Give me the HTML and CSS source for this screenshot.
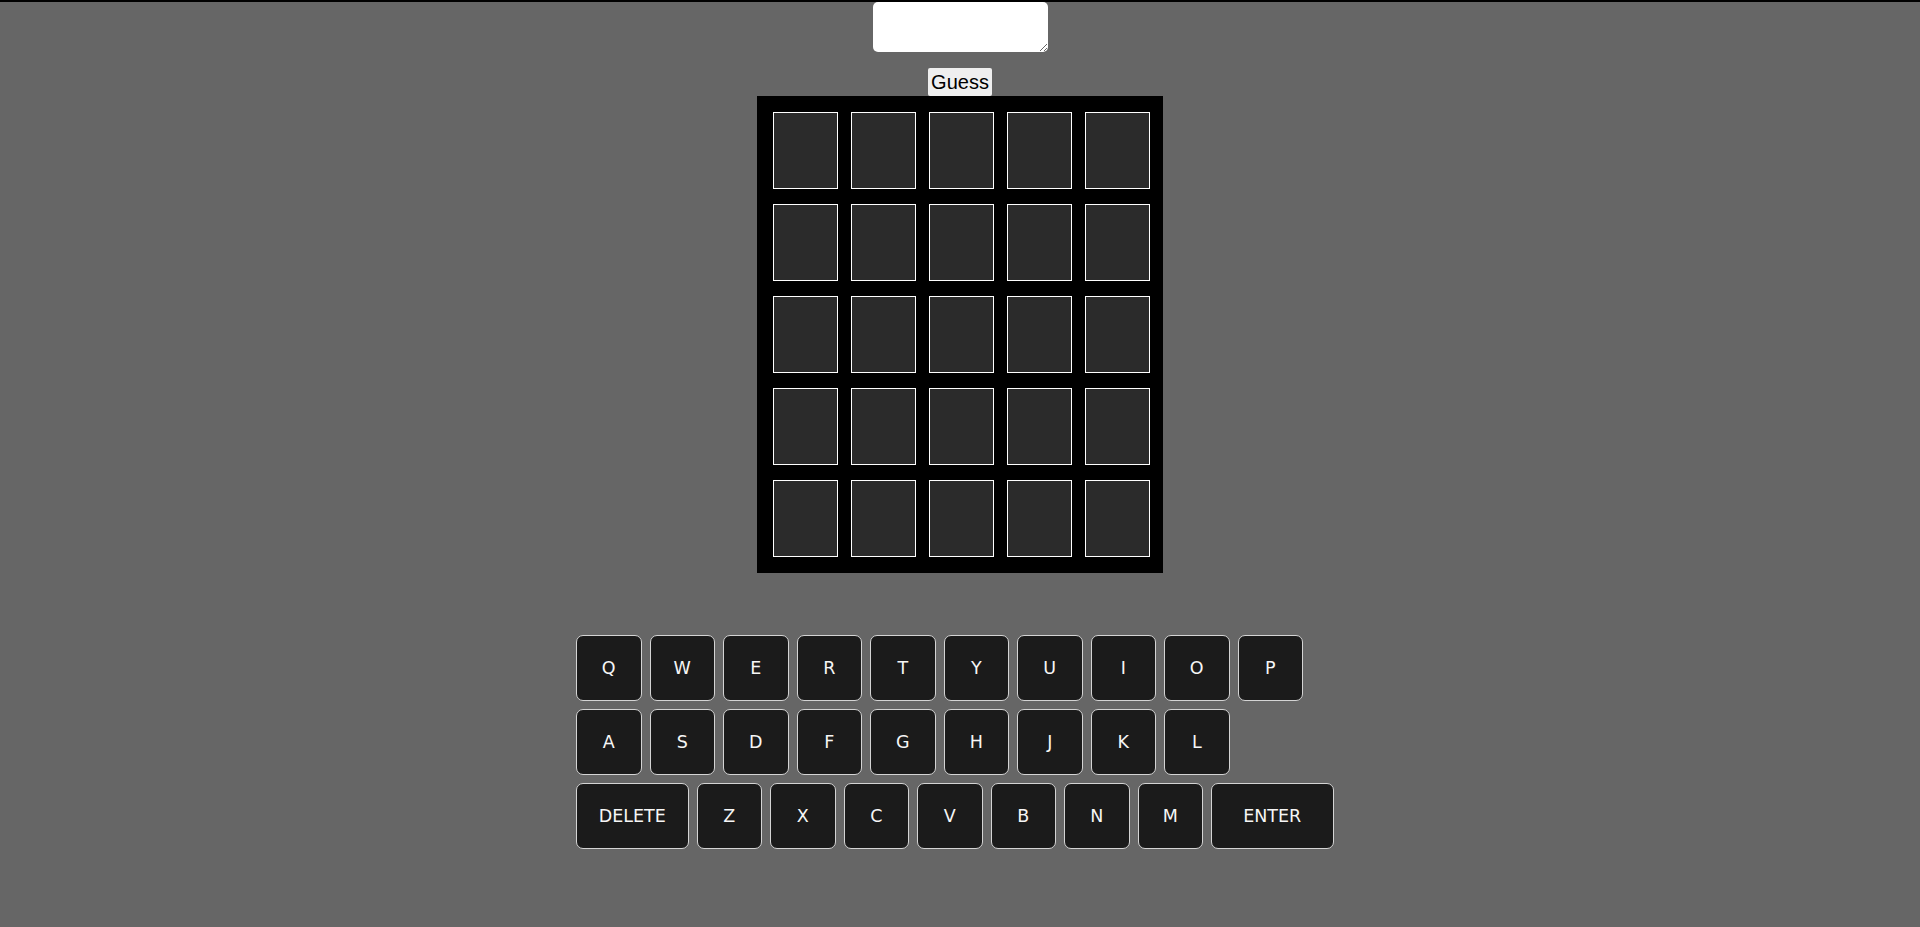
FILE: index.html
```html
<!DOCTYPE html>
<html lang="en">
<head>
<meta charset="utf-8">
<title>Wordle</title>
<link rel="stylesheet" href="styles.css">
</head>
<body>
<div class="app">
  <textarea class="guess-input"></textarea>
  <button class="guess-btn">Guess</button>
  <div class="board">
    <div class="tile"></div><div class="tile"></div><div class="tile"></div><div class="tile"></div><div class="tile"></div>
    <div class="tile"></div><div class="tile"></div><div class="tile"></div><div class="tile"></div><div class="tile"></div>
    <div class="tile"></div><div class="tile"></div><div class="tile"></div><div class="tile"></div><div class="tile"></div>
    <div class="tile"></div><div class="tile"></div><div class="tile"></div><div class="tile"></div><div class="tile"></div>
    <div class="tile"></div><div class="tile"></div><div class="tile"></div><div class="tile"></div><div class="tile"></div>
  </div>
  <div class="keyboard">
    <div class="key-row">
      <button class="key">Q</button><button class="key">W</button><button class="key">E</button><button class="key">R</button><button class="key">T</button><button class="key">Y</button><button class="key">U</button><button class="key">I</button><button class="key">O</button><button class="key">P</button>
    </div>
    <div class="key-row">
      <button class="key">A</button><button class="key">S</button><button class="key">D</button><button class="key">F</button><button class="key">G</button><button class="key">H</button><button class="key">J</button><button class="key">K</button><button class="key">L</button>
    </div>
    <div class="key-row">
      <button class="key key-delete">DELETE</button><button class="key">Z</button><button class="key">X</button><button class="key">C</button><button class="key">V</button><button class="key">B</button><button class="key">N</button><button class="key">M</button><button class="key key-enter">ENTER</button>
    </div>
  </div>
</div>
</body>
</html>
```

FILE: styles.css
```css
html, body {
  margin: 0;
  padding: 0;
}
body {
  background: #666666;
  border-top: 2px solid #000;
  min-height: 925px;
  font-family: "Liberation Sans", Arial, sans-serif;
}
.app {
  display: flex;
  flex-direction: column;
  align-items: center;
}
.guess-input {
  display: block;
  width: 175px;
  height: 50px;
  box-sizing: border-box;
  border: none;
  border-radius: 5px;
  background: #fff;
  margin: 0;
  padding: 2px;
}
.guess-btn {
  margin-top: 16px;
  height: 28px;
  padding: 0 3px;
  line-height: 28px;
  font-family: "Liberation Sans", Arial, sans-serif;
  font-size: 20px;
  color: #000;
  background: #efefef;
  border: none;
  border-radius: 2px;
}
.board {
  width: 406px;
  box-sizing: border-box;
  background: #000;
  padding: 16px 13px 16px 16px;
  display: grid;
  grid-template-columns: repeat(5, 65px);
  grid-auto-rows: 77px;
  column-gap: 13px;
  row-gap: 15px;
}
.tile {
  background: #2b2b2b;
  border: 1px solid #fff;
  box-sizing: border-box;
}
.keyboard {
  width: 768px;
  margin-top: 62px;
  display: flex;
  flex-direction: column;
  gap: 8px;
}
.key-row {
  display: flex;
  gap: 8px;
}
.key {
  width: 65.5px;
  height: 66px;
  box-sizing: border-box;
  background: #1b1b1b;
  border: 1px solid #d4d4d4;
  border-radius: 7px;
  color: #f6f6f6;
  font-family: "DejaVu Sans", Verdana, sans-serif;
  font-size: 17.5px;
  padding: 0;
  display: flex;
  align-items: center;
  justify-content: center;
}
.key-delete {
  width: 112.5px;
}
.key-enter {
  width: 122.5px;
}
```
